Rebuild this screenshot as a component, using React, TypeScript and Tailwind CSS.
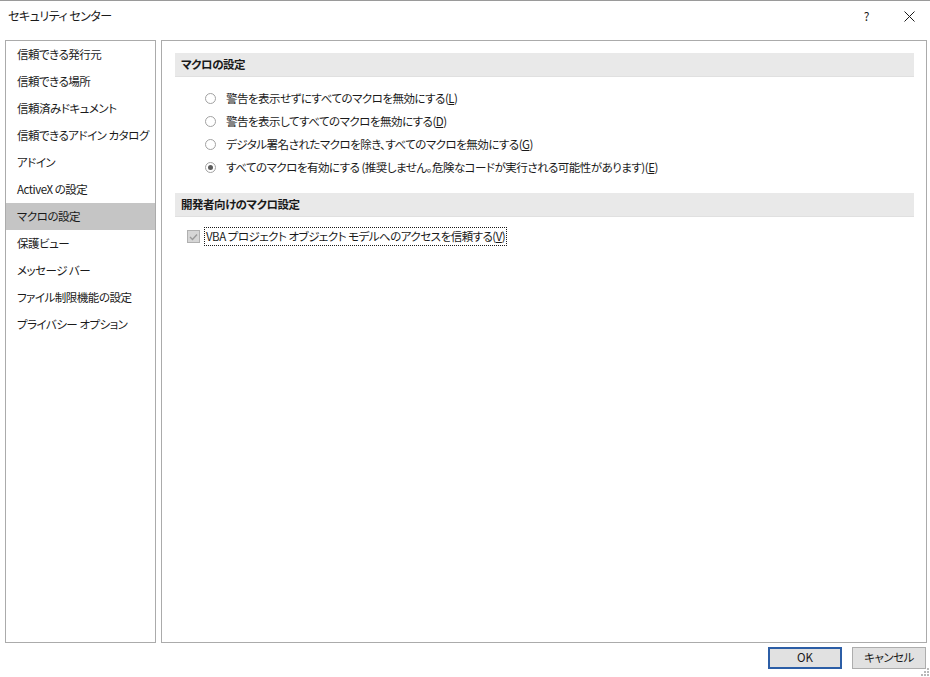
import { useState } from 'react'

const sidebarItems = [
  '信頼できる発行元',
  '信頼できる場所',
  '信頼済みドキュメント',
  '信頼できるアドイン カタログ',
  'アドイン',
  'ActiveX の設定',
  'マクロの設定',
  '保護ビュー',
  'メッセージ バー',
  'ファイル制限機能の設定',
  'プライバシー オプション',
]

const macroOptions = [
  { label: '警告を表示せずにすべてのマクロを無効にする', key: 'L' },
  { label: '警告を表示してすべてのマクロを無効にする', key: 'D' },
  { label: 'デジタル署名されたマクロを除き、すべてのマクロを無効にする', key: 'G' },
  { label: 'すべてのマクロを有効にする (推奨しません。危険なコードが実行される可能性があります)', key: 'E' },
]

function Radio({ checked }: { checked: boolean }) {
  return (
    <span className="w-[11px] h-[11px] rounded-full border border-[#a2a2a2] bg-white flex items-center justify-center shrink-0">
      {checked && <span className="w-[5px] h-[5px] rounded-full bg-[#5c5c5c]" />}
    </span>
  )
}

export default function App() {
  const [selected, setSelected] = useState(3)
  const [active, setActive] = useState(6)

  return (
    <div
      className="w-[930px] h-[677px] bg-white text-[11.5px] tracking-[-0.5px] text-[#1a1a1a] flex flex-col border-t border-[#9a9a9a] [font-feature-settings:'palt'] select-none"
      style={{ fontFamily: '"Noto Sans CJK JP", "Noto Sans", sans-serif' }}
    >
      {/* title bar */}
      <div className="h-[39px] flex items-start pt-[6px] pl-[8px] pr-[14px] leading-[18px]">
        <span className="text-[12px]">セキュリティ センター</span>
        <span className="ml-auto mr-[35px] text-[12px]">?</span>
        <svg width="11" height="11" viewBox="0 0 11 11" className="mr-[1px] mt-[4px]">
          <path d="M0.5 0.5 L10.5 10.5 M10.5 0.5 L0.5 10.5" stroke="#1a1a1a" strokeWidth="1" />
        </svg>
      </div>

      {/* body */}
      <div className="flex pl-[5px] pr-[3px] h-[603px] gap-[5px]">
        <div className="w-[151px] border border-[#ababab]">
          {sidebarItems.map((item, i) => (
            <div
              key={item}
              onClick={() => setActive(i)}
              className={`h-[27px] flex items-center pl-[11px] whitespace-nowrap ${
                i === active ? 'bg-[#c5c5c5]' : ''
              }`}
            >
              {item}
            </div>
          ))}
        </div>

        <div className="flex-1 border border-[#ababab] pt-[12px] pl-[13px] pr-[12px]">
          <div className="h-[24px] bg-[#e9e9e9] border-b border-[#e0e0e0] flex items-center pl-[6px] font-bold">
            マクロの設定
          </div>
          <div className="flex flex-col pl-[30px] pt-[10px] pb-[14px]">
            {macroOptions.map((opt, i) => (
              <div
                key={opt.key}
                onClick={() => setSelected(i)}
                className="h-[23px] flex items-center gap-[10px]"
              >
                <Radio checked={selected === i} />
                <span className="whitespace-nowrap">
                  {opt.label}(<span className="underline">{opt.key}</span>)
                </span>
              </div>
            ))}
          </div>
          <div className="h-[24px] bg-[#e9e9e9] border-b border-[#e0e0e0] flex items-center pl-[6px] font-bold">
            開発者向けのマクロ設定
          </div>
          <div className="flex items-center pl-[12px] pt-[10px] gap-[4px]">
            <span className="w-[13px] h-[13px] border border-[#b0b0b0] bg-[#d6d6d6] flex items-center justify-center shrink-0">
              <svg width="9" height="8" viewBox="0 0 9 8">
                <path d="M1 4 L3.5 6.5 L8 1.5" stroke="#9a9a9a" strokeWidth="1.4" fill="none" />
              </svg>
            </span>
            <span className="border border-dotted border-[#1a1a1a] px-[1px] h-[19px] flex items-center whitespace-nowrap">
              VBA プロジェクト オブジェクト モデルへのアクセスを信頼する(<span className="underline">V</span>)
            </span>
          </div>
        </div>
      </div>

      {/* footer */}
      <div className="flex justify-end gap-[10px] pr-[4px] pt-[4px] relative flex-1">
        <button className="w-[74px] h-[22px] border-2 border-[#2c5ea6] bg-[#e1e1e1] tracking-normal">
          OK
        </button>
        <button className="w-[74px] h-[22px] border border-[#adadad] bg-[#e1e1e1]">
          キャンセル
        </button>
        <svg width="8" height="8" viewBox="0 0 8 8" className="absolute right-[1px] bottom-[1px]">
          <rect x="6" y="0" width="2" height="2" fill="#b8b8b8" />
          <rect x="3" y="3" width="2" height="2" fill="#b8b8b8" />
          <rect x="6" y="3" width="2" height="2" fill="#b8b8b8" />
          <rect x="0" y="6" width="2" height="2" fill="#b8b8b8" />
          <rect x="3" y="6" width="2" height="2" fill="#b8b8b8" />
          <rect x="6" y="6" width="2" height="2" fill="#b8b8b8" />
        </svg>
      </div>
    </div>
  )
}
